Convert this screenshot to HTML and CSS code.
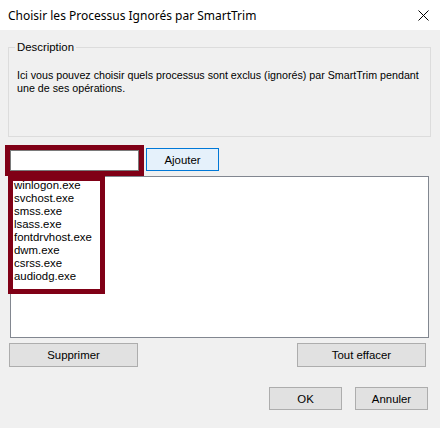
FILE: index.html
```html
<!DOCTYPE html>
<html lang="fr">
<head>
<meta charset="utf-8">
<title>Choisir les Processus Ignorés par SmartTrim</title>
<link rel="stylesheet" href="styles.css">
</head>
<body>
<div class="window">
  <div class="titlebar">
    <span class="title">Choisir les Processus Ignorés par SmartTrim</span>
    <svg class="close" width="11" height="11" viewBox="0 0 11 11"><path d="M0.5 0.5 L10.5 10.5 M10.5 0.5 L0.5 10.5" stroke="#000" stroke-width="1" fill="none"/></svg>
  </div>
  <div class="content">
    <fieldset class="group">
      <legend class="legend">Description</legend>
      <p class="desc">Ici vous pouvez choisir quels processus sont exclus (ignorés) par SmartTrim pendant<br>une de ses opérations.</p>
    </fieldset>
    <div class="input-row">
      <input class="textbox" type="text">
      <button class="btn btn-default">Ajouter</button>
    </div>
    <div class="listbox">
      <ul class="items">
        <li>winlogon.exe</li>
        <li>svchost.exe</li>
        <li>smss.exe</li>
        <li>lsass.exe</li>
        <li>fontdrvhost.exe</li>
        <li>dwm.exe</li>
        <li>csrss.exe</li>
        <li>audiodg.exe</li>
      </ul>
      <div class="highlight"></div>
    </div>
    <div class="action-row">
      <button class="btn btn-wide">Supprimer</button>
      <button class="btn btn-wide">Tout effacer</button>
    </div>
    <div class="footer-row">
      <button class="btn">OK</button>
      <button class="btn">Annuler</button>
    </div>
  </div>
</div>
</body>
</html>
```
FILE: styles.css
```css
html, body {
  margin: 0;
  padding: 0;
}
body {
  font-family: "Liberation Sans", Arial, sans-serif;
  font-size: 11.4px;
  color: #000;
  background: #f0f0f0;
}
.window {
  width: 440px;
  height: 428px;
  display: flex;
  flex-direction: column;
  overflow: hidden;
}
.titlebar {
  height: 30px;
  flex: none;
  background: #fff;
  display: flex;
  align-items: center;
  justify-content: space-between;
  padding: 0 11px 0 8px;
  box-sizing: border-box;
}
.title {
  font-family: "Noto Sans", sans-serif;
  font-size: 12px;
  color: #000;
}
.close {
  display: block;
}
.content {
  flex: 1;
  background: #f0f0f0;
  padding: 10px 9px 0 8px;
}
.group {
  margin: 0;
  border: 1px solid #dcdcdc;
  padding: 0 0 0 8px;
  height: 97px;
  box-sizing: border-box;
  min-width: 0;
}
.legend {
  padding: 0 2px;
  margin-left: -2px;
  line-height: 14px;
}
.desc {
  margin: 15px 0 0;
  font-size: 10.7px;
  line-height: 13px;
  white-space: nowrap;
}
.input-row {
  margin: 11px 0 0 2px;
  display: flex;
  align-items: flex-start;
  gap: 7px;
}
.textbox {
  width: 129px;
  height: 21px;
  margin: 2px 0 0;
  box-sizing: border-box;
  border: 1px solid #7a7a7a;
  background: #fff;
  outline: 5px solid #800016;
  padding: 0 3px;
  font: inherit;
}
.btn {
  width: 73px;
  height: 23px;
  box-sizing: border-box;
  border: 1px solid #adadad;
  background: #e1e1e1;
  font-family: "Liberation Sans", Arial, sans-serif;
  font-size: 11.4px;
  color: #000;
  padding: 0;
  margin: 0;
}
.btn-default {
  border-color: #0078d7;
  background: #e5f1fb;
}
.btn-wide {
  width: 129px;
  height: 24px;
}
.listbox {
  position: relative;
  margin: 5px 0 0 2px;
  width: 419px;
  height: 162px;
  box-sizing: border-box;
  border: 1px solid #828790;
  background: #fff;
}
.items {
  list-style: none;
  margin: 0;
  padding: 2px 3px;
  line-height: 13px;
  color: #000;
}
.highlight {
  position: absolute;
  left: -3px;
  top: -1px;
  width: 97px;
  height: 118px;
  box-sizing: border-box;
  border: 5px solid #800016;
  pointer-events: none;
}
.action-row {
  margin-top: 5px;
  padding: 0 5px 0 1px;
  display: flex;
  justify-content: space-between;
}
.footer-row {
  margin-top: 20px;
  padding-right: 3px;
  display: flex;
  justify-content: flex-end;
  gap: 13px;
}
```
